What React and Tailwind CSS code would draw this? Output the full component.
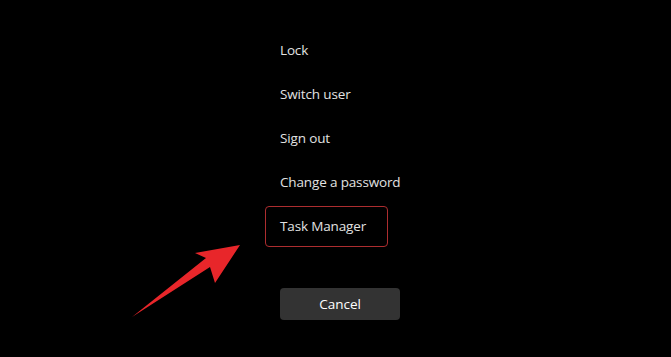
const items = ["Lock", "Switch user", "Sign out", "Change a password", "Task Manager"];

const App = () => {
  return (
    <div
      className="relative w-[671px] h-[357px] bg-black overflow-hidden"
      style={{ fontFamily: '"Open Sans", "Noto Sans", sans-serif' }}
    >
      {/* menu */}
      <div className="flex flex-col gap-[3px] pt-[30px] pl-[265px]">
        {items.map((label) => (
          <div
            key={label}
            className={`h-[41px] w-[123px] flex items-center pl-[14px] rounded-[4px] border text-[13.5px] tracking-[-0.15px] text-[#e2e2e2] whitespace-nowrap ${
              label === "Task Manager" ? "border-[#ad2d2f]" : "border-transparent"
            }`}
          >
            {label}
          </div>
        ))}
      </div>
      {/* cancel */}
      <div className="pl-[280px] pt-[41px]">
        <div className="w-[120px] h-[32px] rounded-[4px] bg-[#333333] flex items-center justify-center text-[13.5px] text-white">
          Cancel
        </div>
      </div>
      {/* red arrow */}
      <svg className="absolute left-0 top-0" width="671" height="357" viewBox="0 0 671 357">
        <polygon points="240,245 215,283 210,267 132,317 206,258 195,253" fill="#e8262a" />
      </svg>
    </div>
  );
};

export default App;
